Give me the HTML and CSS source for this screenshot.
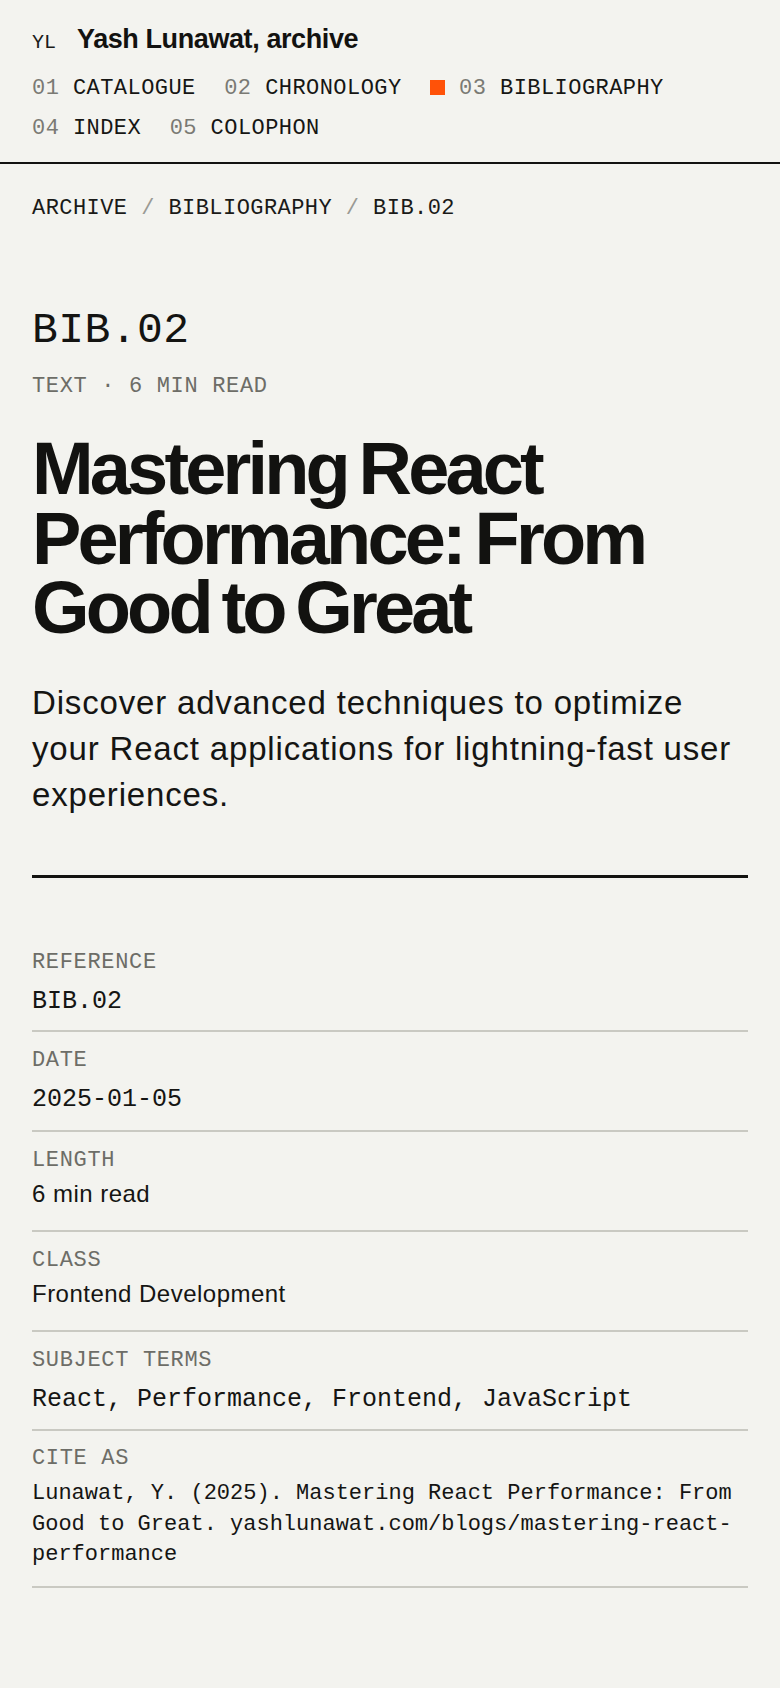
FILE: index.html
```html
<!DOCTYPE html>
<html lang="en">
<head>
<meta charset="utf-8">
<meta name="viewport" content="width=device-width, initial-scale=1">
<title>Mastering React Performance: From Good to Great — Yash Lunawat, archive</title>
<link rel="stylesheet" href="styles.css">
</head>
<body>
<header class="site-header">
  <div class="brand">
    <span class="mark">YL</span>
    <span class="site-title">Yash Lunawat, archive</span>
  </div>
  <nav class="nav">
    <a class="nav-item" href="#"><span class="num">01</span> CATALOGUE</a>
    <a class="nav-item" href="#"><span class="num">02</span> CHRONOLOGY</a>
    <a class="nav-item is-active" href="#"><span class="dot"></span><span class="num">03</span> BIBLIOGRAPHY</a>
    <a class="nav-item" href="#"><span class="num">04</span> INDEX</a>
    <a class="nav-item" href="#"><span class="num">05</span> COLOPHON</a>
  </nav>
</header>

<main class="page">
  <div class="crumbs">ARCHIVE <span class="sep">/</span> BIBLIOGRAPHY <span class="sep">/</span> BIB.02</div>

  <div class="ref-no">BIB.02</div>
  <div class="kind">TEXT · 6 MIN READ</div>

  <h1 class="title">Mastering React Performance: From Good to Great</h1>
  <p class="lede">Discover advanced techniques to optimize your React applications for lightning-fast user experiences.</p>

  <hr class="rule">

  <dl class="meta">
    <div class="meta-row is-first">
      <dt class="meta-label">REFERENCE</dt>
      <dd class="meta-value mono">BIB.02</dd>
    </div>
    <div class="meta-row">
      <dt class="meta-label">DATE</dt>
      <dd class="meta-value mono">2025-01-05</dd>
    </div>
    <div class="meta-row">
      <dt class="meta-label">LENGTH</dt>
      <dd class="meta-value sans">6 min read</dd>
    </div>
    <div class="meta-row">
      <dt class="meta-label">CLASS</dt>
      <dd class="meta-value sans">Frontend Development</dd>
    </div>
    <div class="meta-row is-tight">
      <dt class="meta-label">SUBJECT TERMS</dt>
      <dd class="meta-value mono">React, Performance, Frontend, JavaScript</dd>
    </div>
    <div class="meta-row is-cite">
      <dt class="meta-label">CITE AS</dt>
      <dd class="meta-value cite">Lunawat, Y. (2025). Mastering React Performance: From Good to Great. yashlunawat.com/blogs/mastering-react-performance</dd>
    </div>
  </dl>
</main>
</body>
</html>
```

FILE: styles.css
```css
html {
  background: #f3f3ef;
}

body {
  margin: 0;
  min-height: 1688px;
  background: #f3f3ef;
  color: #141412;
  font-family: "Liberation Sans", Arial, sans-serif;
}

/* ---------- header ---------- */
.site-header {
  padding: 23px 32px 21px;
  border-bottom: 2px solid #121210;
}

.brand {
  display: flex;
  align-items: baseline;
  gap: 21px;
  line-height: 32px;
}

.mark {
  font-family: "Liberation Mono", "DejaVu Sans Mono", monospace;
  font-size: 20px;
  line-height: 20px;
  color: #1a1a18;
}

.site-title {
  font-family: "Liberation Sans", Arial, sans-serif;
  font-weight: 700;
  font-size: 27px;
  letter-spacing: -0.015em;
  color: #121210;
}

.nav {
  margin-top: 22px;
  display: flex;
  flex-wrap: wrap;
  column-gap: 28.5px;
  row-gap: 16px;
  font-family: "Liberation Mono", "DejaVu Sans Mono", monospace;
  font-size: 22px;
  line-height: 24px;
  letter-spacing: 0.02em;
}

.nav-item {
  display: block;
  color: #161614;
  text-decoration: none;
  white-space: nowrap;
}

.nav-item .num {
  color: #7a7a74;
}

.dot {
  display: inline-block;
  width: 15px;
  height: 15px;
  margin-right: 14px;
  vertical-align: -1px;
  background: #ff5208;
}

/* ---------- page ---------- */
.page {
  padding: 33px 32px 0;
}

.crumbs {
  font-family: "Liberation Mono", "DejaVu Sans Mono", monospace;
  font-size: 22px;
  line-height: 24px;
  letter-spacing: 0.02em;
  color: #1a1a18;
}

.crumbs .sep {
  color: #9a9a94;
}

.ref-no {
  margin-top: 86px;
  font-family: "Liberation Mono", "DejaVu Sans Mono", monospace;
  font-size: 43px;
  line-height: 48px;
  letter-spacing: 0.01em;
  color: #141412;
}

.kind {
  margin-top: 20px;
  font-family: "Liberation Mono", "DejaVu Sans Mono", monospace;
  font-size: 22px;
  line-height: 24px;
  letter-spacing: 0.03em;
  color: #6d6d67;
}

.title {
  margin: 35px 0 0;
  font-family: "Liberation Sans", Arial, sans-serif;
  font-weight: 700;
  font-size: 74px;
  line-height: 69.5px;
  letter-spacing: -0.052em;
  word-spacing: -5px;
  color: #121210;
}

.lede {
  margin: 37px 0 0;
  font-family: "Liberation Sans", Arial, sans-serif;
  font-size: 33px;
  line-height: 46.3px;
  letter-spacing: 0.025em;
  color: #151513;
}

.rule {
  margin: 57px 0 0;
  height: 3px;
  border: 0;
  background: #121210;
}

/* ---------- metadata ---------- */
.meta {
  margin: 56px 0 0;
}

.meta-row {
  padding: 17px 0 13px;
  border-bottom: 2px solid #c9c9c2;
}

.meta-row.is-first {
  padding-bottom: 11px;
}

.meta-row.is-tight {
  padding-bottom: 12px;
}

.meta-row.is-cite {
  padding-top: 16px;
}

.meta-label {
  font-family: "Liberation Mono", "DejaVu Sans Mono", monospace;
  font-size: 22px;
  line-height: 24px;
  letter-spacing: 0.03em;
  color: #6d6d67;
}

.meta-value {
  margin: 6px 0 0;
  min-height: 38px;
  color: #151513;
}

.meta-value.mono {
  margin-top: 9px;
  min-height: 35px;
  font-family: "Liberation Mono", "DejaVu Sans Mono", monospace;
  font-size: 25px;
  line-height: 35px;
}

.meta-value.sans {
  font-family: "Liberation Sans", Arial, sans-serif;
  font-size: 24px;
  line-height: 30px;
  letter-spacing: 0.02em;
}

.meta-value.cite {
  margin: 8px 0 3px;
  min-height: 0;
  font-family: "Liberation Mono", "DejaVu Sans Mono", monospace;
  font-size: 22px;
  line-height: 30.3px;
}
```
